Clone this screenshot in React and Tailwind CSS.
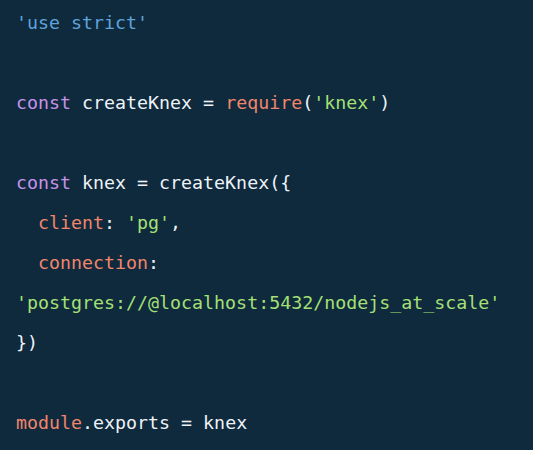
export default function App() {
  const kw = "text-[#c792ea]";
  const fn = "text-[#f0866b]";
  const str = "text-[#a5e075]";
  const plain = "text-[#eef3f7]";

  return (
    <div className="w-[533px] h-[450px] bg-[#0f293d] overflow-hidden pl-4 pt-[3px] font-['DejaVu_Sans_Mono',monospace] text-[18.3px] leading-[40px] whitespace-pre">
      <div className="text-[#5fa3db]">'use strict'</div>
      <div>&nbsp;</div>
      <div className={plain}>
        <span className={kw}>const</span> createKnex = <span className={fn}>require</span>(<span className={str}>'knex'</span>)
      </div>
      <div>&nbsp;</div>
      <div className={plain}>
        <span className={kw}>const</span> knex = createKnex{"({"}
      </div>
      <div className={plain}>
        {"  "}<span className={fn}>client</span>: <span className={str}>'pg'</span>,
      </div>
      <div className={plain}>
        {"  "}<span className={fn}>connection</span>:
      </div>
      <div className={str}>'postgres://@localhost:5432/nodejs_at_scale'</div>
      <div className={plain}>{"})"}</div>
      <div>&nbsp;</div>
      <div className={plain}>
        <span className={fn}>module</span>.exports = knex
      </div>
    </div>
  );
}
